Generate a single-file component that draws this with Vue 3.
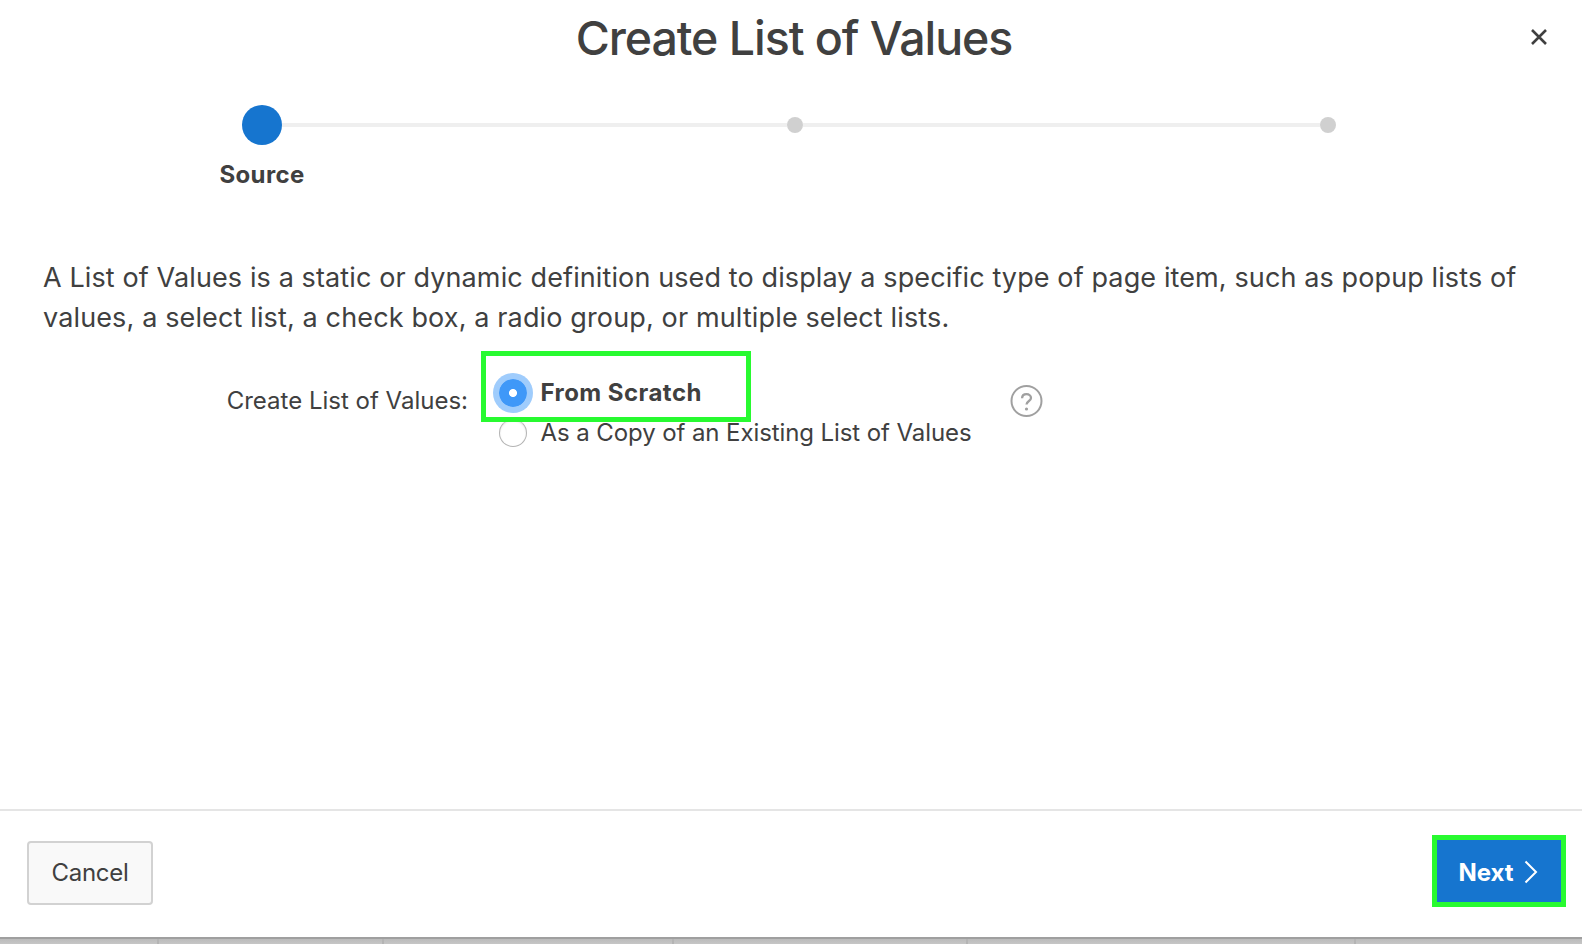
<script setup>
import { ref } from 'vue'

const source = ref('scratch')
const columns = [159, 225, 290, 294, 388]
</script>

<template>
  <div class="page">
    <section class="dialog">
      <header class="header">
        <h1 class="title">Create List of Values</h1>
        <button class="close" aria-label="Close">
          <svg width="20" height="20" viewBox="0 0 20 20"><path d="M3 3 17 17M17 3 3 17" fill="none" stroke="#404040" stroke-width="2.6" /></svg>
        </button>
      </header>

      <div class="progress">
        <div class="track">
          <span class="current"></span>
          <span class="line first"></span>
          <span class="dot"></span>
          <span class="line"></span>
          <span class="dot"></span>
        </div>
        <div class="step-label"><span>Source</span></div>
      </div>

      <main class="body">
        <p class="intro">
          <span class="l1">A List of Values is a static or dynamic definition used to display a specific type of page item, such as popup lists of</span><br />
          <span class="l2">values, a select list, a check box, a radio group, or multiple select lists.</span>
        </p>
        <div class="field">
          <div class="field-label"><span>Create List of Values:</span></div>
          <div class="options">
            <label class="option" @click="source = 'scratch'">
              <span class="radio" :class="{ on: source === 'scratch' }"></span>
              <b class="t-scratch">From Scratch</b>
            </label>
            <label class="option" @click="source = 'copy'">
              <span class="radio" :class="{ on: source === 'copy' }"></span>
              <span class="t-copy">As a Copy of an Existing List of Values</span>
            </label>
            <div class="mark"></div>
          </div>
          <svg class="help" width="34" height="34" viewBox="0 0 34 34" fill="none" stroke="#a0a0a0" stroke-width="2">
            <circle cx="17.5" cy="17" r="15" />
            <path d="M13.1 14.3C13.1 11.6 14.9 10.2 17.5 10.2S22 11.8 22 14C22 17 17.5 17 17.5 20.6" stroke-width="2.3" />
            <circle cx="17.5" cy="25" r="1.6" fill="#a0a0a0" stroke="none" />
          </svg>
        </div>
      </main>

      <footer class="footer">
        <button class="cancel"><span>Cancel</span></button>
        <button class="next">
          <span>Next</span>
          <svg width="14" height="24" viewBox="0 0 14 24"><path d="M1.5 1.5 12 12 1.5 22.5" fill="none" stroke="#fff" stroke-width="2" /></svg>
        </button>
      </footer>
    </section>
    <div class="behind">
      <i v-for="(w, i) in columns" :key="i" :style="{ width: w + 'px' }"></i>
    </div>
  </div>
</template>

<style>
body { margin: 0; overflow: hidden; }
</style>

<style scoped>
* { box-sizing: border-box; }
.page {
  width: 1582px;
  height: 944px;
  overflow: hidden;
  font-family: Inter, "Liberation Sans", sans-serif;
  color: #404040;
  background: #c2c2c2;
}
.dialog {
  display: flex;
  flex-direction: column;
  height: 937px;
  background: #fff;
}
.header {
  display: grid;
  grid-template-columns: 80px 1fr 80px;
  height: 105px;
  padding-left: 6px;
}
.title {
  grid-column: 2;
  margin: 0;
  padding-top: 8px;
  text-align: center;
  font-size: 46.5px;
  line-height: 60px;
  font-weight: 500;
  letter-spacing: -1.05px;
  white-space: nowrap;
}
button { font: inherit; color: inherit; cursor: pointer; }
.close {
  display: flex;
  width: 20px;
  height: 20px;
  margin: 27px 0 0 27px;
  padding: 0;
  border: 0;
  background: none;
}
.progress { height: 147px; padding-left: 182px; }
.track { display: flex; align-items: center; height: 40px; padding-left: 60px; }
.current { width: 40px; height: 40px; border-radius: 50%; background: #1675cf; }
.line { width: 517px; height: 4px; background: #efefef; }
.line.first { width: 505px; }
.dot { width: 16px; height: 16px; border-radius: 50%; background: #d0d0d0; }
.step-label {
  width: 160px;
  margin-top: 15px;
  text-align: center;
  font-size: 24px;
  line-height: 30px;
  font-weight: 700;
  letter-spacing: 0.35px;
}
.body { flex: 1; padding: 6px 0 0 43px; }
.intro {
  margin: 0;
  font-size: 27px;
  line-height: 40px;
  white-space: nowrap;
}
.l1 { letter-spacing: 0.113px; }
.l2 { letter-spacing: 0.135px; }
.field { display: flex; height: 120px; padding-top: 35px; }
.field-label {
  width: 425px;
  padding-top: 12px;
  text-align: right;
  font-size: 24px;
  line-height: 32px;
  white-space: nowrap;
}
.options { position: relative; width: 541px; padding-left: 31px; }
.option {
  display: flex;
  align-items: center;
  gap: 13.5px;
  height: 40px;
  font-size: 24px;
  white-space: nowrap;
}
.t-scratch { padding-bottom: 2px; letter-spacing: 0.45px; }
.t-copy { padding-bottom: 2px; letter-spacing: -0.09px; }
.radio {
  flex: none;
  width: 28px;
  height: 28px;
  border: 1px solid #b4b4b4;
  border-top-color: #c8c8c8;
  border-radius: 50%;
  background: #fff;
  box-shadow: inset 0 1px 2px #e8e8e8;
}
.radio.on {
  border: 0;
  background: radial-gradient(circle, #fff 0 3.6px, #3f98f8 4.4px);
  box-shadow: 0 0 0 6px #9fccfc;
}
.mark {
  position: absolute;
  left: 12.5px;
  top: -22px;
  width: 270px;
  height: 71px;
  border: 5px solid #28fa30;
}
.help { margin-top: 11px; }
.footer {
  display: flex;
  justify-content: space-between;
  align-items: flex-start;
  height: 128px;
  padding: 24px 16px 0 27px;
  border-top: 2px solid #e5e5e5;
}
.cancel {
  width: 126px;
  height: 64px;
  margin-top: 6px;
  padding: 0 0 2px;
  border: 2px solid #d2d2d2;
  border-radius: 4px;
  background: #f9f9f9;
  font-size: 24px;
  letter-spacing: -0.25px;
}
.next {
  display: flex;
  align-items: center;
  justify-content: center;
  gap: 10px;
  width: 134px;
  height: 72px;
  padding: 2px 2px 0 0;
  border: 5px solid #28fa30;
  background: #1675cf;
  color: #fff;
  font-size: 24px;
  font-weight: 700;
}
.behind {
  display: flex;
  height: 7px;
  border-top: 2px solid #9f9f9f;
  background: linear-gradient(#bbb, #c6c6c6);
}
.behind i { flex: none; border-right: 2px solid #b4b4b4; }
</style>
